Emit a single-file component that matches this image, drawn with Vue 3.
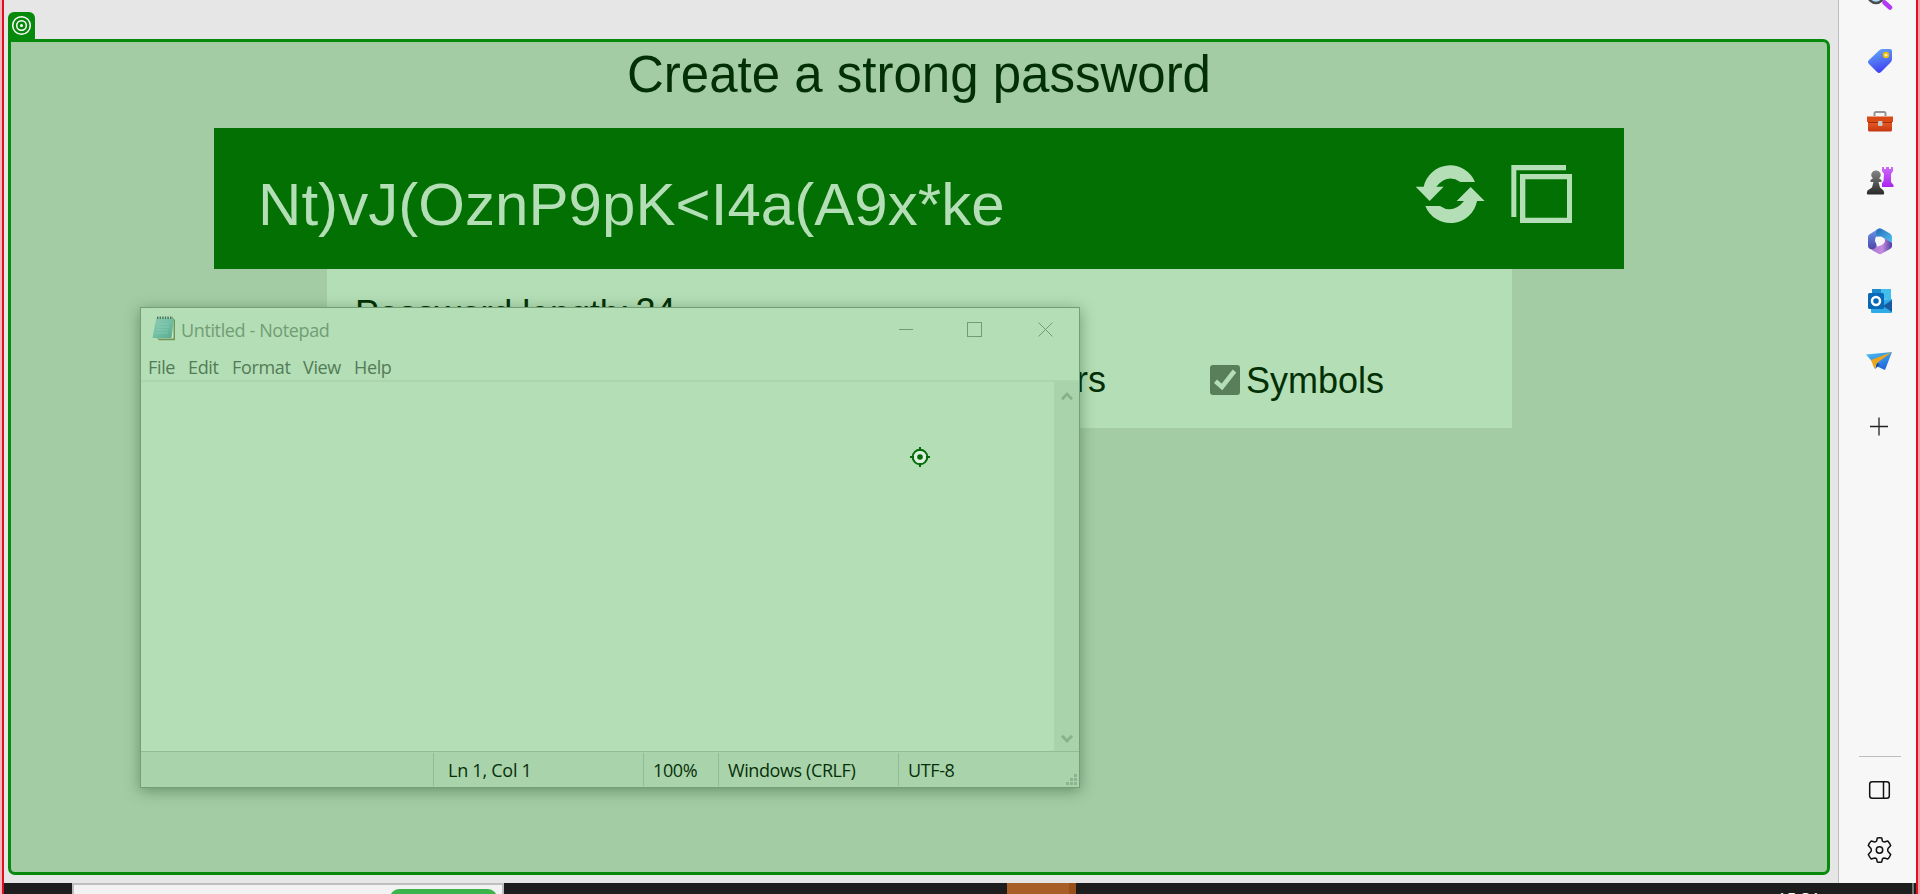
<script setup>
const menu = ['File', 'Edit', 'Format', 'View', 'Help']
const grip = [[8, 0], [4, 4], [8, 4], [0, 8], [4, 8], [8, 8]]
</script>

<template>
  <div class="screen">
    <div class="edge left"></div>
    <div class="main">
      <div class="viewport">
        <div class="stage">
          <div class="tab">
            <svg width="27" height="27" viewBox="0 0 27 27" fill="none" stroke="#fff">
              <circle cx="13.5" cy="13.5" r="8.8" stroke-width="1.5" />
              <circle cx="13.5" cy="13.5" r="4.8" stroke-width="1.5" />
              <circle cx="13.5" cy="13.5" r="1.5" fill="#fff" stroke="none" />
            </svg>
          </div>
          <div class="frame">
            <h1><span>Create a strong password</span></h1>
            <div class="banner">
              <span class="password">Nt)vJ(OznP9pK&lt;I4a(A9x*ke</span>
              <svg class="actions" width="180" height="70" viewBox="90 120 540 210" fill="#b4deb5">
                <path d="M131 200 A81 81 0 0 1 285 186 H241 Q202 160 169 200 H191 L149 243 L107 200 Z" />
                <path d="M291 243 A81 81 0 0 1 136 258 H180 Q218 284 252 243 H230 L272 201 L314 243 Z" />
                <path d="M394 135 H558 V151 H409 V291 H394 Z" />
                <path fill-rule="evenodd" d="M420 162 H576 V309 H420 Z M436 178 V293 H561 V178 Z" />
              </svg>
            </div>
            <div class="panel">
              <div class="length">Password length: <span class="count">24</span></div>
              <div class="options">
                <span class="numbers">Numbers</span>
                <span class="check">
                  <svg width="30" height="30" viewBox="0 0 30 30"><rect width="30" height="30" rx="3" fill="#587f5a" /><path d="M5.500 16.200 L12 22 L24.500 6" fill="none" stroke="#b4deb5" stroke-width="4.500" /></svg>
                </span>
                <span class="symbols">Symbols</span>
              </div>
            </div>
          </div>
        </div>

        <div class="notepad">
          <div class="titlebar">
            <svg width="26" height="26" viewBox="0 0 26 26">
              <defs><linearGradient id="pad" x1="0" y1="0" x2="1" y2="1"><stop offset="0" stop-color="#8fcbb3" /><stop offset=".55" stop-color="#6fbda3" /><stop offset="1" stop-color="#55a990" /></linearGradient></defs>
              <path d="M6 22 L8 24.3 H24 V4 L22 2Z" fill="#6f9659" />
              <path d="M7 22.5 H22.5 V5Z" fill="#c9e6c0" />
              <path d="M5.2 2.5 H22.8 L20.5 22 H1.5Z" fill="url(#pad)" />
              <path d="M6 8H18M5.5 11H18M5 14H17M4.5 17H17" stroke="#8ccfb5" stroke-width=".7" />
              <path d="M6 1.8 H22" stroke="#46745c" stroke-width="2.4" stroke-dasharray="1.4 1.2" />
            </svg>
            <span class="name">Untitled - Notepad</span>
            <svg class="controls" width="160" height="20" viewBox="0 0 160 20" fill="none" stroke="#719d75">
              <path d="M2 9.500H16" />
              <rect x="70.500" y="2.500" width="14" height="14" />
              <path d="M141.500 2.500L155.500 16.500M155.500 2.500L141.500 16.500" />
            </svg>
          </div>
          <div class="menu">
            <span v-for="m in menu" :key="m" :class="m.toLowerCase()">{{ m }}</span>
          </div>
          <div class="editor">
            <div class="page"></div>
            <div class="scroll">
              <svg width="12" height="10" viewBox="0 0 12 10"><path d="M1 8.300L6 3L11 8.300" /></svg>
              <svg width="12" height="10" viewBox="0 0 12 10"><path d="M1 1.700L6 7L11 1.700" /></svg>
            </div>
          </div>
          <div class="status">
            <span></span>
            <span class="pos">Ln 1, Col 1</span>
            <span class="zoom">100%</span>
            <span class="eol">Windows (CRLF)</span>
            <span class="enc">UTF-8</span>
            <svg class="grip" width="11" height="11" fill="#8bb590"><rect v-for="(g, i) in grip" :key="i" :x="g[0]" :y="g[1]" width="3" height="3" /></svg>
          </div>
        </div>

        <svg class="target" width="22" height="22" viewBox="0 0 22 22" fill="none" stroke="#046b08">
          <circle cx="11" cy="11" r="7.300" fill="#dceedd" stroke-width="2" />
          <circle cx="11" cy="11" r="2.800" fill="#046b08" stroke="none" />
          <path d="M11 1V5M11 17V21M1 11H5M17 11H21" stroke-width="2" />
        </svg>
      </div>

      <aside class="sidebar">
        <svg viewBox="0 0 30 30"><circle cx="11" cy="11" r="8" fill="#a9dcf8" stroke="#4c4c4c" stroke-width="2.500" /><path d="M19.500 18.500L25 23.500" stroke="#b139f4" stroke-width="4.500" stroke-linecap="round" /></svg>
        <svg viewBox="0 0 30 30">
          <defs><linearGradient id="tag" x1=".3" y1="0" x2=".6" y2="1"><stop offset="0" stop-color="#62a6fa" /><stop offset="1" stop-color="#3d3df0" /></linearGradient></defs>
          <path d="M17 3H25Q27 3 27 5V13Q27 15 25.500 16.500L16 26Q14 28 12 26L4 18Q2 16 4 14L14 4.500Q15.500 3 17 3Z" fill="url(#tag)" /><circle cx="21" cy="9" r="2.400" fill="#fff3b8" stroke="#f1b900" stroke-width="1.700" />
        </svg>
        <svg viewBox="0 0 30 30">
          <defs><linearGradient id="box" x1="0" y1="0" x2="0" y2="1"><stop offset="0" stop-color="#ee6524" /><stop offset="1" stop-color="#c53613" /></linearGradient></defs>
          <path d="M9.500 10V7.500Q9.500 6 11 6H19Q20.500 6 20.500 7.500V10" fill="none" stroke="#949494" stroke-width="2" /><path d="M3 14H27V24Q27 25.500 25.500 25.500H4.500Q3 25.500 3 24Z" fill="url(#box)" /><path d="M2 10.500H28V16H2Z" fill="#d94a15" /><path d="M3 16.500H27" stroke="#9f2c0d" /><rect x="13" y="15" width="4.500" height="5" rx="1" fill="#cacaca" />
        </svg>
        <svg viewBox="0 0 30 30">
          <defs><linearGradient id="pawn" x1="0" y1="0" x2="0" y2="1"><stop offset="0" stop-color="#858585" /><stop offset="1" stop-color="#292929" /></linearGradient><linearGradient id="rook" x1="0" y1="0" x2="0" y2="1"><stop offset="0" stop-color="#cf6afa" /><stop offset="1" stop-color="#a824ee" /></linearGradient></defs>
          <path d="M17 1H19V3H21V1H24V3H26V1H28V5L26 8V16L28.500 19V21H17V17L18.500 15L19 8L17 5Z" fill="url(#rook)" /><path d="M11 4.500A4.300 4.300 0 0 1 14 12.200L16.500 14V16H13.500L15 21.500L18.500 24.500Q20 28.500 18 28.500H3Q1 28.500 2.500 24.500L7 21.500L8.500 16H5.500V14L8 12.200A4.300 4.300 0 0 1 11 4.500Z" fill="url(#pawn)" />
        </svg>
        <svg viewBox="0 0 30 30">
          <defs><linearGradient id="m1" x1="0" y1="0" x2="1" y2="1"><stop offset="0" stop-color="#2265b5" /><stop offset="1" stop-color="#53c7f4" /></linearGradient><linearGradient id="m2" x1="0" y1="0" x2="0" y2="1"><stop offset="0" stop-color="#6498ed" /><stop offset="1" stop-color="#5142a6" /></linearGradient><linearGradient id="m3" x1="0" y1="0" x2="1" y2="0"><stop offset="0" stop-color="#a271d2" /><stop offset=".55" stop-color="#c58be0" /><stop offset="1" stop-color="#4f3b9e" /></linearGradient></defs>
          <path d="M11 4L14 2.500Q15 2 17 3L25 7.500Q27 9 27 11V18L19 12L10 10Z" fill="url(#m1)" /><path d="M13 3L5 8Q3 9 3 11V20Q3 22 5 23L9 24Q14 22 10 15Q10 11 12 10Q10 6 13 3Z" fill="url(#m2)" /><path d="M27 17V20Q27 22 25 23L17 27.500Q15 29 13 27.500L5 23Q8 25 11 21Q15 20 19 17Q21 15 19 12Z" fill="url(#m3)" /><circle cx="15" cy="15" r="4.400" fill="#f7f7f7" />
        </svg>
        <svg viewBox="0 0 30 30"><path d="M7 3H26V13H7Z" fill="#2088cd" /><path d="M16 3H26V13H16Z" fill="#42bdec" /><path d="M12 8H17V15H12Z" fill="#1264ad" /><path d="M6 14L27 13V26Q27 27 26 27H7Q6 27 6 26Z" fill="#2eabe6" /><path d="M18 20L27 14V26Z" fill="#155b9d" /><rect x="3" y="7" width="16" height="16" rx="1.500" fill="#0869b9" /><circle cx="11" cy="15" r="4" fill="none" stroke="#fff" stroke-width="2.500" /></svg>
        <svg viewBox="0 0 30 30"><defs><linearGradient id="fly" x1="0" y1="0" x2=".5" y2="1"><stop offset="0" stop-color="#4dc3f0" /><stop offset="1" stop-color="#2266df" /></linearGradient></defs><path d="M1 8.500L27 6L20 24L11 20Z" fill="url(#fly)" /><path d="M10 23L12 17L15 18.500Z" fill="#174b98" /><path d="M6 14L27 6L12 17L9.500 23Z" fill="#eea51c" /></svg>
        <svg class="plus" viewBox="0 0 30 30" stroke="#222" stroke-width="1.300"><path d="M5 15.500H23M14 6.500V24.500" /></svg>
        <div class="rule"></div>
        <svg class="pane" viewBox="0 0 30 30" fill="none" stroke="#111" stroke-width="1.500"><rect x="4.700" y="6.700" width="19.600" height="16.600" rx="2.500" /><path d="M18.500 7V23" /></svg>
        <svg class="gear" viewBox="0 0 30 30" fill="none" stroke="#111" stroke-width="1.500" stroke-linejoin="round"><circle cx="14.500" cy="15" r="3.200" /><path d="M12.300 3Q14.500 2.500 16.700 3L17.500 6.200Q18 7 19.200 7L22.800 6Q24.500 8 25.700 10.500L23 13.500Q22.300 15 23 16.500L25.700 19.500Q24.500 22.500 22.800 24L19.200 23Q18 23 17.500 23.800L16.700 27Q14.500 27.500 12.300 27L11.500 23.800Q11 23 9.800 23L6.200 24Q4.500 22 3.300 19.500L6 16.500Q6.700 15 6 13.500L3.300 10.500Q4.500 7.500 6.200 6L9.800 7Q11 7 11.500 6.200Z" /></svg>
      </aside>

      <footer class="taskbar">
        <div class="search"><div class="go"></div></div>
        <div class="app"></div>
        <span class="clock">15:31</span>
        <div class="peek"></div>
      </footer>
    </div>
    <div class="edge right"></div>
  </div>
</template>

<style>
html, body { margin: 0; overflow: hidden; }
</style>

<style scoped>
* { box-sizing: border-box; }
svg { display: block; flex: none; }
.screen { width: 1920px; height: 894px; display: flex; background: #fff; overflow: hidden; font-family: "Liberation Sans", Arial, sans-serif; }
.edge { flex: none; background: #df1022; }
.left { width: 4px; border-left: 2px solid #f6b8bd; }
.right { width: 4px; border-right: 2px solid #f5a1aa; }
.main { width: 1912px; height: 894px; display: grid; grid-template: 883px 11px / 1834px 78px; }
.viewport { position: relative; background: #e6e6e6; padding: 12px 8px 8px 4px; }
.stage { display: flex; flex-direction: column; height: 863px; }
.tab { width: 27px; height: 27px; background: #078a0b; border-radius: 6px 6px 0 0; }
.frame { width: 1822px; height: 836px; border: 3px solid #078a0b; border-radius: 0 7px 7px 7px; background: #a3cca4; padding-left: 203px; }
h1 { margin: 0; width: 1410px; height: 86px; padding-top: 3px; text-align: center; font-weight: 400; font-size: 51px; line-height: 60px; color: #032f04; white-space: nowrap; }
.banner { width: 1410px; height: 141px; background: #037003; display: flex; justify-content: space-between; align-items: flex-start; padding: 32px 34px 0 44px; }
.password { margin-top: 2px; font-size: 60px; line-height: 86px; letter-spacing: .06px; color: #b4deb5; white-space: nowrap; }
.panel { width: 1185px; height: 159px; margin-left: 113px; background: #b4deb5; padding: 24px 0 0 28px; color: #032f04; font-size: 36px; white-space: nowrap; }
.length { height: 67px; line-height: 42px; letter-spacing: -.1px; }
.count { position: relative; top: -2px; margin-left: -4px; }
.options { display: flex; align-items: center; height: 40px; padding-left: 605px; line-height: 40px; }
.numbers { width: 250px; }
.symbols { margin: 1px 0 0 6px; }

.notepad { position: absolute; left: 136px; top: 307px; width: 940px; height: 481px; border: 1px solid #739f77; background: #b4deb5; box-shadow: 0 3px 14px rgba(20, 65, 25, .42); display: flex; flex-direction: column; font: 18px/24px "Open Sans", "Noto Sans", sans-serif; }
.titlebar { height: 42px; display: flex; align-items: center; padding-left: 10px; color: #719d75; flex: none; }
.name { width: 717px; margin: 2px 0 0 3px; padding-left: 1px; letter-spacing: -.38px; white-space: nowrap; }
.controls { margin-top: 2px; }
.menu { height: 32px; flex: none; border-bottom: 2px solid #abd5ad; display: flex; padding: 5px 0 0 7px; color: #527c57; letter-spacing: -.35px; line-height: 24px; }
.file { width: 40px; } .edit { width: 44px; } .format { width: 71px; } .view { width: 51px; }
.editor { flex: 1; display: flex; }
.page { flex: 1; }
.scroll { width: 25px; background: #a9d3ab; display: flex; flex-direction: column; justify-content: space-between; padding: 9px 0 7px 6.5px; fill: none; stroke: #87b18b; stroke-width: 2.800; }
.status { position: relative; flex: none; height: 36px; border-top: 1px solid #91bc95; background: #a9d3ab; display: grid; grid-template-columns: 292px 210px 75px 180px 1fr; color: #073009; white-space: nowrap; letter-spacing: -.4px; padding-top: 1px; }
.status span + span { border-left: 1px solid #91bc95; height: 33px; padding-left: 9px; line-height: 35px; }
.status .pos { padding-left: 14px; letter-spacing: -.25px; }
.grip { position: absolute; right: 2px; bottom: 2px; }
.target { position: absolute; left: 904.5px; top: 446px; }

.sidebar { background: #f7f7f7; border-left: 1px solid #bdbdbd; display: flex; flex-direction: column; align-items: center; overflow: hidden; padding-left: 5px; }
.sidebar svg { width: 30px; height: 30px; margin-bottom: 30px; }
.sidebar svg:first-child { margin-top: -16px; margin-bottom: 32px; }
.sidebar .plus { margin: 5px 0 0; }
.rule { width: 42px; height: 1px; background: #bdbdbd; margin: 315px 0 0; flex: none; }
.sidebar .pane { margin: 18px 0 0; }
.sidebar .gear { margin: 30px 0 0; }
.taskbar { grid-column: 1 / 3; height: 11px; background: #1d1d1d; display: flex; overflow: hidden; }
.search { width: 432px; margin-left: 68px; border: solid #bfbfbf; border-width: 2px 2px 0; background: #f2f2f2; padding: 4px 5px 0 0; display: flex; justify-content: flex-end; flex: none; }
.go { width: 107px; height: 30px; border-radius: 9px; background: #3bb44b; }
.app { width: 69px; margin-left: 503px; background: #a85e27; border-right: 7px solid #99501a; flex: none; }
.clock { width: 60px; margin: 6px 0 0 701px; color: #fff; font: 17px/20px "Open Sans", sans-serif; flex: none; }
.peek { width: 2px; margin-left: 75px; background: #777; flex: none; }
</style>
